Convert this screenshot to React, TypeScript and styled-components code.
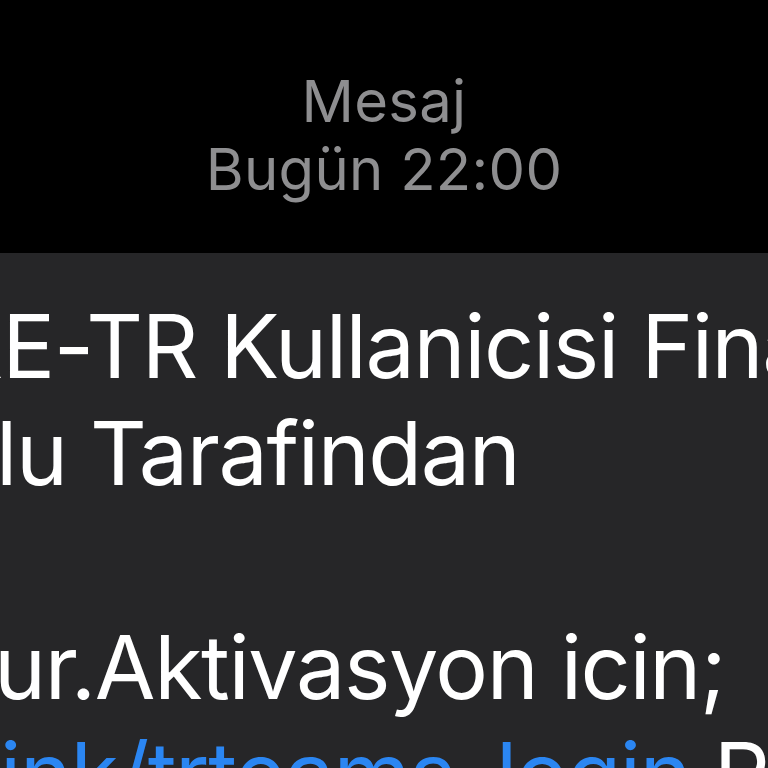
import React from 'react';
import styled, { createGlobalStyle } from 'styled-components';

const GlobalStyle = createGlobalStyle`
  html, body {
    margin: 0;
    padding: 0;
    background: #000;
  }
  body {
    font-family: Inter, 'Noto Sans', 'Liberation Sans', sans-serif;
    -webkit-font-smoothing: antialiased;
  }
`;

const lines: { text: React.ReactNode; shift: number }[] = [
  { text: 'RE-TR Kullanicisi Finans', shift: -53 },
  { text: 'lu Tarafindan', shift: -4 },
  { text: '\u00a0', shift: 0 },
  { text: 'ur.Aktivasyon icin;', shift: -6 },
];

function App() {
  return (
    <>
      <GlobalStyle />
      <Screen>
        <Header>
          <Sender>Mesaj</Sender>
          <Stamp>Bugün 22:00</Stamp>
        </Header>
        <Bubble>
          {lines.map((l, i) => (
            <Line key={i} $shift={l.shift}>
              {l.text}
            </Line>
          ))}
          <Line $shift={0}>
            <LinkText>ink/trteams_login</LinkText> Referans
          </Line>
        </Bubble>
      </Screen>
    </>
  );
}

export default App;

const Screen = styled.div`
  width: 768px;
  height: 768px;
  overflow: hidden;
  background: #000;
  display: flex;
  flex-direction: column;
`;

const Header = styled.div`
  display: flex;
  flex-direction: column;
  align-items: center;
  padding: 67px 0 50px;
  flex-shrink: 0;
`;

const Sender = styled.div`
  color: #8e8e90;
  font-size: 58px;
  line-height: 68px;
  font-weight: 400;
  letter-spacing: 0.3px;
`;

const Stamp = styled(Sender)``;

const Bubble = styled.div`
  flex: 1;
  background: #262628;
  padding-top: 40px;
  overflow: hidden;
`;

const Line = styled.div<{ $shift: number }>`
  color: #fff;
  font-size: 88px;
  line-height: 107px;
  letter-spacing: -1.4px;
  white-space: nowrap;
  margin-left: ${(p) => p.$shift}px;
`;

const LinkText = styled.span`
  color: #2b86f2;
`;
